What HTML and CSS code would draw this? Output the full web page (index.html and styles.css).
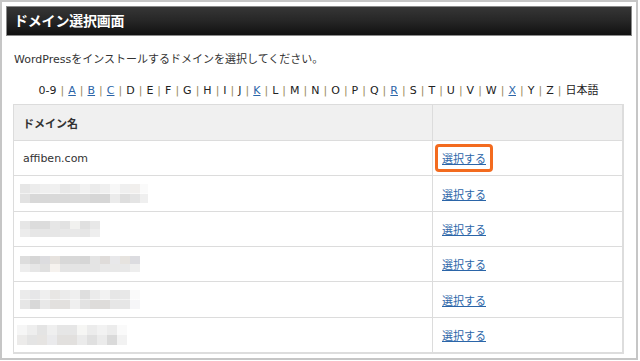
FILE: index.html
```html
<!DOCTYPE html>
<html lang="ja">
<head>
<meta charset="utf-8">
<title>ドメイン選択画面</title>
<link rel="stylesheet" href="styles.css">
</head>
<body>
<div class="frame">
  <h1 class="title-bar">ドメイン選択画面</h1>
  <div class="content">
    <p class="desc">WordPressをインストールするドメインを選択してください。</p>
    <p class="alpha">0-9 <span class="sep">|</span> <a href="#">A</a> <span class="sep">|</span> <a href="#">B</a> <span class="sep">|</span> <a href="#">C</a> <span class="sep">|</span> D <span class="sep">|</span> E <span class="sep">|</span> F <span class="sep">|</span> G <span class="sep">|</span> H <span class="sep">|</span> I <span class="sep">|</span> J <span class="sep">|</span> <a href="#">K</a> <span class="sep">|</span> L <span class="sep">|</span> M <span class="sep">|</span> N <span class="sep">|</span> O <span class="sep">|</span> P <span class="sep">|</span> Q <span class="sep">|</span> <a href="#">R</a> <span class="sep">|</span> S <span class="sep">|</span> T <span class="sep">|</span> U <span class="sep">|</span> V <span class="sep">|</span> W <span class="sep">|</span> <a href="#">X</a> <span class="sep">|</span> Y <span class="sep">|</span> Z <span class="sep">|</span> 日本語</p>
    <table class="domains">
      <tr class="head"><th class="col-name">ドメイン名</th><th class="col-act"></th></tr>
      <tr class="r-short"><td>affiben.com</td><td><span class="highlight"><a href="#">選択する</a></span></td></tr>
      <tr class="r-tall"><td><span class="blur blur-a"></span></td><td><a href="#">選択する</a></td></tr>
      <tr class="r-short"><td><span class="blur blur-b"></span></td><td><a href="#">選択する</a></td></tr>
      <tr class="r-short"><td><span class="blur blur-c"></span></td><td><a href="#">選択する</a></td></tr>
      <tr class="r-tall"><td><span class="blur blur-d"></span></td><td><a href="#">選択する</a></td></tr>
      <tr class="r-short"><td><span class="blur blur-e"></span></td><td><a href="#">選択する</a></td></tr>
    </table>
  </div>
</div>
</body>
</html>
```

FILE: styles.css
```css
html, body {
  margin: 0;
  padding: 0;
  background: #ffffff;
}
body {
  font-family: "DejaVu Sans", "Noto Sans CJK JP", sans-serif;
  font-size: 11px;
  color: #333333;
}
.frame {
  box-sizing: border-box;
  width: 638px;
  height: 360px;
  border: 2px solid #c6c6c6;
  padding: 4px 4px 0 4px;
  overflow: hidden;
}
.title-bar {
  box-sizing: border-box;
  margin: 0;
  height: 30px;
  border: 1px solid #8a8a8a;
  background: linear-gradient(to bottom, #363636 0%, #262626 50%, #111111 100%);
  color: #ffffff;
  font-family: "Noto Sans CJK JP", sans-serif;
  font-weight: 700;
  font-size: 14px;
  line-height: 27px;
  padding-left: 7px;
  letter-spacing: -0.2px;
}
.content {
  padding: 0 8px 0 7px;
}
.desc {
  margin: 0;
  padding-top: 16px;
  height: 20px;
  line-height: 16px;
  padding-left: 1px;
}
.alpha {
  margin: 0;
  padding-top: 10px;
  height: 22px;
  line-height: 18px;
  text-align: center;
  color: #222222;
  word-spacing: 0.5px;
}
.alpha a {
  color: #2b65a8;
}
.alpha .sep {
  color: #9a8a60;
}
.domains {
  width: 611px;
  border-collapse: collapse;
  border: 2px solid #dddddd;
  border-top-width: 1px;
  border-left-width: 1px;
}
.domains th, .domains td {
  border: 1px solid #dcdcdc;
  padding: 0 0 0 9px;
  text-align: left;
  vertical-align: middle;
}
.r-short td {
  height: 34px;
}
.r-tall td {
  height: 35px;
}
.domains .head th {
  background: #f0f0f0;
  height: 35px;
  font-family: "Noto Sans CJK JP", sans-serif;
  font-weight: 700;
  font-size: 11px;
  color: #333333;
}
.col-name {
  width: 409px;
}
.domains a {
  color: #2b65a8;
  font-family: "Noto Sans CJK JP", sans-serif;
  text-decoration: underline;
}
.highlight {
  position: relative;
  display: inline-block;
}
.highlight::after {
  content: "";
  position: absolute;
  left: -7px;
  right: -7px;
  top: -6px;
  bottom: -6px;
  border: 3px solid #f36b1f;
  border-radius: 4px;
}
.blur {
  display: block;
  height: 19px;
  margin-left: -3px;
}
.blur-a {
  width: 128px;
  background:
    linear-gradient(to right, #e6e6e6 0 10px, #ececec 10px 20px, #efefef 20px 30px, #f0f0f0 30px 40px, #e8e8e8 40px 50px, #ebebeb 50px 60px, #f1f1f1 60px 70px, #ebebeb 70px 80px, #efefef 80px 90px, #f7f7f7 90px 100px, #efefef 100px 110px, #f1efed 110px 120px, #fafafa 120px 128px) top / 100% 50% no-repeat,
    linear-gradient(to right, #e2e2e2 0 10px, #d8d8d8 10px 30px, #d9d9d9 30px 50px, #dadada 50px 70px, #d6d6d6 70px 90px, #ebebeb 90px 100px, #dedede 100px 110px, #e4e4e4 110px 120px, #efefef 120px 128px) bottom / 100% 50% no-repeat;
}
.blur-b {
  width: 80px;
  height: 16px;
  background:
    linear-gradient(to right, #e6e6e6 0 10px, #dcdcdc 10px 30px, #e6e6e6 30px 40px, #e2e2e2 40px 50px, #f1f1ef 50px 60px, #e0e0e0 60px 70px, #e8e8e8 70px 80px) top / 100% 50% no-repeat,
    linear-gradient(to right, #ececec 0 10px, #e6e6e6 10px 40px, #e8e8e8 40px 60px, #e6e6e6 60px 70px, #eeeeee 70px 80px) bottom / 100% 50% no-repeat;
}
.blur-c {
  width: 120px;
  height: 16px;
  background:
    linear-gradient(to right, #dddddd 0 10px, #d6d6d6 10px 20px, #dcdcdf 20px 30px, #e6e2de 30px 40px, #d8d8d8 40px 60px, #d6d6d6 60px 70px, #e4e4e4 70px 80px, #dfdcda 80px 90px, #e8e8ea 90px 100px, #e6e3df 100px 110px, #dcdce0 110px 120px) top / 100% 50% no-repeat,
    linear-gradient(to right, #ededed 0 10px, #e6e6e6 10px 20px, #e0e0e0 20px 30px, #f6f2ee 30px 40px, #e4e4e4 40px 80px, #e8e8e8 80px 110px, #eeeeee 110px 120px) bottom / 100% 50% no-repeat;
}
.blur-d {
  width: 120px;
  height: 19px;
  background:
    linear-gradient(to right, #ebebeb 0 10px, #e6e6e8 10px 20px, #efefef 20px 30px, #e8e6e4 30px 40px, #ebebeb 40px 50px, #efefef 50px 60px, #dedede 60px 70px, #ebebeb 70px 80px, #f2f2f2 80px 90px, #e6e6e6 90px 100px, #e8e8e8 100px 110px, #fafafa 110px 120px) top / 100% 50% no-repeat,
    linear-gradient(to right, #e6e6e6 0 10px, #d8d8d8 10px 20px, #e8e8e8 20px 30px, #e2e0de 30px 50px, #efefef 50px 60px, #e2e2e2 60px 70px, #dedcda 70px 90px, #e6e6e6 90px 110px, #f6f6f8 110px 120px) bottom / 100% 50% no-repeat;
}
.blur-e {
  width: 110px;
  height: 20px;
  margin-left: -6px;
  background:
    linear-gradient(to right, #f6f6f6 0 10px, #eeeeee 10px 20px, #e4e4e4 20px 30px, #efefef 30px 40px, #e6e6e6 40px 60px, #f6f6f4 60px 70px, #ececec 70px 80px, #f2f2f2 80px 90px, #ececec 90px 100px, #fafafa 100px 110px) top / 100% 50% no-repeat,
    linear-gradient(to right, #ecebea 0 10px, #e4e4e4 10px 20px, #e6e4e2 20px 30px, #eaeaec 30px 40px, #e2e0de 40px 60px, #ebebeb 60px 70px, #e0e0e0 70px 80px, #ebebeb 80px 90px, #dadada 90px 100px, #f2f2f2 100px 110px) bottom / 100% 50% no-repeat;
}
```
